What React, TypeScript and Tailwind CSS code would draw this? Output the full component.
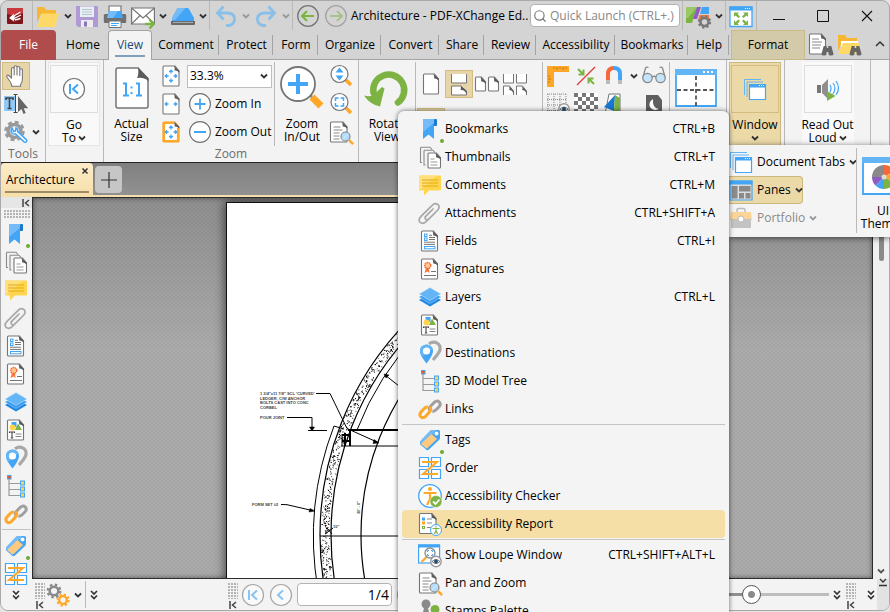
import type { ReactNode } from "react";
import { Search } from "lucide-react";
import clsx from "clsx";

type IconProps = { className?: string };

const BLUE = "#42a5f5";
const GREY = "#757575";

function Svg({ children, className = "size-6", box = "0 0 24 24" }: { children: ReactNode; className?: string; box?: string }) {
  return (
    <svg viewBox={box} className={clsx("shrink-0 overflow-visible", className)} fill="none" aria-hidden="true">
      {children}
    </svg>
  );
}

function Chevron({ className = "text-[#333]" }: IconProps) {
  return (
    <Svg className={clsx("size-2", className)} box="0 0 8 8">
      <path d="M1 2.5l3 3 3-3" stroke="currentColor" strokeWidth="1.8" />
    </Svg>
  );
}

function DoubleChevron() {
  return (
    <Svg className="h-2.5 w-2" box="0 0 8 10">
      <path d="M1 1l3 3 3-3M1 5.5l3 3 3-3" stroke="#333" strokeWidth="1.7" />
    </Svg>
  );
}

function Collapse() {
  return (
    <Svg className="size-2" box="0 0 8 8">
      <path d="M1 0v8M7 1L3.5 4 7 7" stroke="#444" strokeWidth="1.5" />
    </Svg>
  );
}

function Sheet({ x = 3.5, y = 2, w = 16, h = 20, fill = "#fff", stroke = GREY }: { x?: number; y?: number; w?: number; h?: number; fill?: string; stroke?: string }) {
  const r = x + w;
  return (
    <>
      <path d={`M${x} ${y + 1}q0-1 1-1h${w - 5}l4 5v${h - 6}q0 1-1 1H${x + 1}q-1 0-1-1z`} fill={fill} stroke={stroke} strokeWidth="1.1" />
      <path d={`M${r - 5} ${y - 0.3}q1 3.5 0.5 4.5 3 0 4.8 2.6v-2z`} fill="#5a5a5a" />
    </>
  );
}

/* navigation pane icons */

const BookmarkIcon = () => (
  <Svg>
    <path d="M16 2h2q1 0 1 1v5q0 1-1 1h-2z" fill="#1e78cc" />
    <path d="M5 3q0-1 1-1h11l-1 1.5V22l-5.5-4.5L5 22z" fill={BLUE} />
    <path d="M5 3q0-1 1-1h10v4L5 15z" fill="#74bbf8" />
    <circle cx="24" cy="24" r="2" fill="#6fa92f" />
  </Svg>
);

const ThumbnailsIcon = () => (
  <Svg>
    <path d="M4 17.5H2.5V3q0-.8.8-.8H12l2 2.3M7.5 20H6V6q0-.8.8-.8H15l2 2.3" stroke="#8a8a8a" strokeWidth="1.1" />
    <Sheet x={10} y={8} w={12.5} h={15} />
    <path d="M12.5 14h4M12.5 17h7M12.5 20h7" stroke="#9a9a9a" />
  </Svg>
);

const CommentsIcon = () => (
  <Svg>
    <path d="M2 2.500h20q1 0 1 1v13q0 1-1 1H11L6 22.500v-5H2q-1 0-1-1v-13q0-1 1-1z" fill="#ffd54f" />
    <path d="M2 2.500h17L2 17.300q-1-.3-1-1v-13q0-.8 1-.8z" fill="#ffdf7e" />
    <path d="M4 7h16M4 10h16M4 13h16" stroke="#e5a90c" strokeWidth="1.1" />
  </Svg>
);

const AttachmentsIcon = () => (
  <Svg>
    <path d="M15 8L7.7 15.4q-1.3 1.6.1 2.900 1.400 1.200 2.900-.1L19.800 9q2.500-3 .2-5.300-2.500-2.200-5.300.2L3.200 15.200Q-.3 19 2.100 21.400q2.800 2.200 6-.7L17.500 11.300" stroke="#a8a8a8" strokeWidth="1.7" strokeLinecap="round" />
  </Svg>
);

const FieldsIcon = () => (
  <Svg>
    <Sheet />
    <rect x="6.5" y="5" width="2.5" height="2.5" stroke={BLUE} />
    <rect x="6.5" y="9" width="2.5" height="2.5" stroke={BLUE} />
    <path d="M11 6.300h3M11 8.500h6M11 10.500h6M6 13.200h11M6 15.400h11" stroke="#757575" />
    <rect x="6.5" y="17.5" width="10.5" height="2.3" stroke={BLUE} />
  </Svg>
);

const SignaturesIcon = () => (
  <Svg>
    <Sheet />
    <path d="M8 11l-1.500 5 3-1.500 2 1.500-.5-5z" fill="#f4793f" />
    <circle cx="9.7" cy="8.5" r="3" fill="#ffc98a" stroke="#f4683a" strokeWidth="1.5" strokeDasharray="1.5 .6" />
    <path d="M13 14.500h5M6 18.500h12" stroke="#757575" />
  </Svg>
);

const LayersIcon = () => (
  <Svg>
    <path d="M1 15l11-6 11 6-11 6.500z" fill="#1e88e5" />
    <path d="M1 12l11-6 11 6-11 6.500z" fill="#3a9bee" stroke="#b5dbfa" strokeWidth=".5" />
    <path d="M1 9l11-6.500L23 9l-11 6.500z" fill="#64b5f6" stroke="#d8ecfc" strokeWidth=".5" />
  </Svg>
);

const ContentIcon = () => (
  <Svg>
    <Sheet />
    <rect x="7.5" y="4" width="5" height="5" fill={BLUE} />
    <path d="M14 5.500l4 6.500h-7z" fill="#7cb342" />
    <circle cx="8.5" cy="9.5" r="3" fill="#ffd54f" />
    <path d="M5.500 15v-1h5v1M8 14v6M6.800 20h2.400" stroke="#444" strokeWidth="1.1" />
    <path d="M11.500 16h6M11.500 18.500h6" stroke="#888" />
  </Svg>
);

const DestinationsIcon = () => (
  <Svg>
    <path d="M11 3q4-3.300 8.500-.7 4 3 2 8-2 4-6.500 8.700" stroke="#a8a8a8" strokeWidth="3.2" />
    <path d="M8.500 3.500q-6.500.5-6.500 7 .5 4.500 6.500 12 6-7.500 6.500-12 0-6.500-6.500-7z" fill={BLUE} />
    <path d="M8.500 3.500q-6.500.5-6.500 7 .2 2.500 2 5.300L14.500 8Q13 4 8.500 3.500z" fill="#64b5f6" />
    <circle cx="8.5" cy="10" r="3.6" fill="#fff" />
  </Svg>
);

const TreeIcon = () => (
  <Svg>
    <path d="M5 5v16.500h12M5 9.500h12M5 15.500h12" stroke="#9a9a9a" strokeWidth="1.2" />
    <rect x="3.5" y="1.5" width="3.5" height="3.5" fill="#f4511e" stroke={BLUE} />
    <rect x="16.5" y="7" width="4" height="4" fill="#ffd54f" stroke={BLUE} />
    <rect x="16.5" y="13" width="4" height="4" fill="#ffd54f" stroke={BLUE} />
    <rect x="16.5" y="19" width="4" height="4" fill="#ffd54f" stroke={BLUE} />
  </Svg>
);

const LinksIcon = () => (
  <Svg>
    <path d="M12.500 14.500q-2.500-2.800 0-5.300l4-4q2.600-2.300 4.800-.2 2 2.300-.2 4.700l-3.500 3.500q-1.500 1.300-3.200 1" stroke="#a0a0a0" strokeWidth="3" />
    <path d="M11.500 9.800q2.500 2.600 0 5.200l-4 4.500q-2.600 2.300-4.700.2-2-2.300.2-4.700l3.500-3.800Q8 9.800 9.800 10" stroke="#ffa726" strokeWidth="3" />
  </Svg>
);

const TagsIcon = () => (
  <Svg>
    <path d="M2.500 13L12 3q1-1 2-1h6.500q1.500 0 1.500 1.500V10q0 1-1 2L11 21.500q-1.500 1.300-3 0l-5.500-5q-1.300-1.500 0-3.500z" fill={BLUE} />
    <path d="M2.500 13L12 3q1-1 2-1h4L4.500 18.500l-2-2q-1.300-1.500 0-3.500z" fill="#74bbf8" />
    <path d="M4 15l9.500-9 5.500 5-9.500 9q-1 .8-2 0L4 16.500q-.5-.8 0-1.500z" fill="#ffc980" />
    <circle cx="18.5" cy="5.5" r="2" fill="#fff" />
    <circle cx="24" cy="24" r="2" fill="#6fa92f" />
  </Svg>
);

const OrderIcon = () => (
  <Svg>
    <path d="M1.500 1.500h9v9h-9zM13.500 1.500h9v9h-9zM1.500 13.500h9v9h-9zM13.500 13.500h9v9h-9z" fill="#fff" stroke={BLUE} strokeWidth="1.2" />
    <path d="M4 6h15L5 18h15" stroke="#ffa726" strokeWidth="2" />
  </Svg>
);

const CheckerIcon = () => (
  <Svg>
    <circle cx="12" cy="12" r="11.3" fill="#fff" stroke={BLUE} strokeWidth="1.3" />
    <circle cx="12" cy="5" r="2" fill="#ffa726" />
    <path d="M5.500 9h13M12 9v6L9 21M12.500 14v3" stroke="#ffa726" strokeWidth="2.2" />
    <circle cx="18" cy="17.5" r="6" fill="#7cb342" stroke="#fff" strokeWidth=".5" />
    <path d="M15 17.500l2.500 2.500 4-4.500" stroke="#fff" strokeWidth="1.8" />
  </Svg>
);

const ReportIcon = () => (
  <Svg>
    <Sheet x={1.5} y={1.5} w={16.5} h={20} />
    <rect x="4.5" y="6" width="2" height="2" stroke={BLUE} />
    <rect x="4.5" y="10" width="2" height="2" stroke="#ffa726" />
    <rect x="4.5" y="14.5" width="2" height="2" stroke="#7cb342" />
    <path d="M9 7h5M9 11h5M9 15.500h4" stroke="#888" />
    <circle cx="18" cy="18" r="5.5" fill="#fff" stroke={BLUE} />
    <path d="M14.500 16.500h7M18 16v2.500l-1.500 3.500M18 18.500l1.500 3.500M18 14v1.500" stroke="#7cb342" strokeWidth="1.2" />
  </Svg>
);

const Glass = ({ x, y, r = 4.5 }: { x: number; y: number; r?: number }) => (
  <>
    <path d={`M${x + r * 0.8} ${y + r * 0.8}l4 4`} stroke="#ffa726" strokeWidth="2.4" />
    <circle cx={x} cy={y} r={r} fill="#b5dcfa" stroke="#8a8a8a" strokeWidth="1.2" />
    <path d={`M${x - r * 0.6} ${y + r * 0.6}L${x + r * 0.6} ${y - r * 0.6}`} stroke="#e3f2fd" strokeWidth=".8" />
  </>
);

const Eye = ({ x, y }: { x: number; y: number }) => (
  <>
    <circle cx={x} cy={y} r="5.2" fill="#fff" stroke="#999" strokeWidth="1.4" />
    <path d={`M${x - 4} ${y}q4-4 8 0-4 4-8 0z`} fill="#fff" stroke="#555" strokeWidth=".8" />
    <circle cx={x} cy={y} r="2" fill="#1e4d78" />
  </>
);

const LoupeIcon = () => (
  <Svg>
    <rect x=".6" y="2" width="21" height="18" fill="#fff" stroke={BLUE} strokeWidth="1.2" />
    <path d="M0 1.500h22v3H0z" fill={BLUE} />
    <path d="M8.500 14l-5 5" stroke="#ffa726" strokeWidth="2.2" />
    <circle cx="12" cy="10" r="5" fill="#fff" stroke="#8a8a8a" strokeWidth="1.3" />
    <path d="M9.500 9V7.500H11M13 7.500h1.500V9M14.500 11v1.500H13M11 12.500H9.500V11" stroke={BLUE} />
    <Eye x={18} y={18.5} />
  </Svg>
);

const PanZoomIcon = () => (
  <Svg>
    <Sheet x={1.5} y={2} w={16.5} h={20} />
    <path d="M4.500 7h7M4.500 10h9M4.500 13h6M4.500 16h6M4.500 19h6" stroke="#888" />
    <Glass x={16.5} y={16.5} />
  </Svg>
);

const StampsIcon = () => (
  <Svg>
    <circle cx="8" cy="5" r="4.5" fill="#8a8a8a" />
    <path d="M6 9h4l1 4 6 2v6H1v-6l4-2z" fill="#8a8a8a" />
    <circle cx="17" cy="10.5" r="4.5" fill="#7cb342" />
    <path d="M12 16h10v6H12z" fill="#7cb342" />
  </Svg>
);

type PaneItem = { label: string; icon: () => ReactNode; keys?: string };

const PANES: PaneItem[][] = [
  [
    { label: "Bookmarks", icon: BookmarkIcon, keys: "CTRL+B" },
    { label: "Thumbnails", icon: ThumbnailsIcon, keys: "CTRL+T" },
    { label: "Comments", icon: CommentsIcon, keys: "CTRL+M" },
    { label: "Attachments", icon: AttachmentsIcon, keys: "CTRL+SHIFT+A" },
    { label: "Fields", icon: FieldsIcon, keys: "CTRL+I" },
    { label: "Signatures", icon: SignaturesIcon },
    { label: "Layers", icon: LayersIcon, keys: "CTRL+L" },
    { label: "Content", icon: ContentIcon },
    { label: "Destinations", icon: DestinationsIcon },
    { label: "3D Model Tree", icon: TreeIcon },
    { label: "Links", icon: LinksIcon },
  ],
  [
    { label: "Tags", icon: TagsIcon },
    { label: "Order", icon: OrderIcon },
    { label: "Accessibility Checker", icon: CheckerIcon },
    { label: "Accessibility Report", icon: ReportIcon },
  ],
  [
    { label: "Show Loupe Window", icon: LoupeIcon, keys: "CTRL+SHIFT+ALT+L" },
    { label: "Pan and Zoom", icon: PanZoomIcon },
    { label: "Stamps Palette", icon: StampsIcon },
  ],
];

/* title bar icons */

const LogoIcon = () => (
  <Svg className="size-4" box="0 0 16 16">
    <rect width="16" height="16" rx="1" fill="#7d1519" />
    <path d="M0 1q0-1 1-1h14q1 0 1 1v4Q9 9 0 6z" fill="#c9393d" />
    <path d="M13.500 4L6 8.500M14 7L6 11M13.500 10.500L8 12" stroke="#fff" strokeWidth="1.3" />
    <path d="M2 10l5-4.500-.5 2.500 2 .5-1.500 1.500 1 1.500-1.500.5 1 2z" fill="#fff" />
  </Svg>
);

const FolderIcon = () => (
  <Svg>
    <path d="M1 3h7l2 3h10v4H5L1 19z" fill="#f7b733" />
    <path d="M6 9.500h17l-4 13.500H1z" fill="#ffd968" />
  </Svg>
);

const SaveIcon = () => (
  <Svg>
    <path d="M1 2h21q1 0 1 1v20H3l-2-2z" fill="#b09ad6" />
    <path d="M5 2.500h14V13H5z" fill="#e9f0f4" />
    <path d="M7 5.500h10M7 8h10M7 10.500h10" stroke="#b5c4cf" />
    <path d="M6 16h12v7H6z" fill="#ececec" />
    <path d="M9 17.500h3v5H9z" fill="#8d76b8" />
  </Svg>
);

const PrinterIcon = () => (
  <Svg>
    <path d="M6 2h12v8H6z" fill="#fff" stroke={GREY} strokeWidth="1.2" />
    <path d="M2 10h20q1.200 0 1.200 1.500V18q0 1-1 1H2q-1.200 0-1.200-1v-6.500Q.8 10 2 10z" fill="#707070" />
    <path d="M6 7l-2 7h16l-2-7z" fill={BLUE} />
    <path d="M6 7l-2 7h6l5-7z" fill="#74bbf8" />
    <path d="M6 17h12v6.500H6z" fill="#fff" stroke={GREY} />
    <path d="M8 19.500h8M8 21.500h6" stroke={BLUE} />
  </Svg>
);

const MailIcon = () => (
  <Svg>
    <path d="M.6 4h22.800v16H.6z" fill="#fff" stroke={GREY} strokeWidth="1.2" />
    <path d="M.6 4L12 14 23.400 4M.6 20L9 11.500M23.400 20L15 11.500" stroke={GREY} strokeWidth="1.1" />
    <path d="M14 20h7M18.500 15.500l4 4.500-4 4.500" stroke="#7cb342" strokeWidth="2.5" />
  </Svg>
);

const ScannerIcon = () => (
  <Svg>
    <path d="M6 5q0-1 1.500-1h9q1 0 1.500 1l5 9v3H1v-3z" fill={BLUE} />
    <path d="M6 5q0-1 1.500-1h7L4 16H1v-2z" fill="#74bbf8" />
    <path d="M0 17h24v3q0 1-1 1H1q-1 0-1-1z" fill="#6a6a6a" />
    <path d="M2 18.500h20" stroke="#aaa" />
  </Svg>
);

const UndoIcon = ({ flip }: { flip?: boolean }) => (
  <Svg className={clsx("size-6", flip && "-scale-x-100")}>
    <path d="M4 9h10q6.500.5 6.500 6T15 21.500h-3" stroke="#8abfe8" strokeWidth="2.800" />
    <path d="M9.500 2.500L3.500 9l6 6.500" stroke="#8abfe8" strokeWidth="2.800" />
  </Svg>
);

const CircleArrow = ({ flip }: { flip?: boolean }) => (
  <Svg className={clsx("size-6", flip && "-scale-x-100 opacity-50")}>
    <circle cx="12" cy="12" r="10.3" stroke={GREY} strokeWidth="1.3" />
    <path d="M6.500 12H18M11 7l-5 5 5 5" stroke="#7cb342" strokeWidth="2" />
  </Svg>
);

const UiOptionsIcon = () => (
  <Svg>
    <path d="M0 3h11L6 19H0z" fill="#7cb342" />
    <path d="M0 3h11L2 14H0z" fill="#98c963" />
    <path d="M11 3h4l-4 12H7z" fill="#8e5cc2" />
    <path d="M16 3h7v7h-9z" fill={BLUE} />
    <path d="M13.500 11H23v5H12z" fill="#f4793f" />
    <circle cx="18.5" cy="18" r="4" stroke="#777" strokeWidth="2.5" fill="#d4d4d4" />
    <circle cx="18.5" cy="18" r="5.7" stroke="#777" strokeWidth="2" strokeDasharray="2.2 2.28" />
  </Svg>
);

const FullScreenIcon = () => (
  <Svg>
    <path d="M1 3h22v19.500H1z" fill="#fff" stroke={BLUE} strokeWidth="1.3" />
    <path d="M.4 2.500h23v4H.4z" fill={BLUE} />
    <path d="M16 4.500h5" stroke="#fff" strokeDasharray="1 1" />
    <path d="M5 13V8.500h5L8.500 10l2.500 2.500-1.500 1.500L6.500 11.500zM19 13V8.500h-5l1.500 1.500-2.500 2.500 1.500 1.500 3-2.500zM5 16v5h5L8.500 19.500l2.500-2.500L9.500 15.500l-3 2.500zM19 16v5h-5l1.500-1.500-2.500-2.500 1.500-1.500 3 2.500z" fill="#7cb342" />
  </Svg>
);

const Binoculars = () => (
  <path d="M12.500 22l2.200-8h3v2h1.600v-2h3l2.200 8q0 1.500-2.500 1.500T19.500 22v-2h-2v2q0 1.500-2.500 1.500T12.500 22z" fill="#666" />
);

/* ribbon icons */

const HandIcon = () => (
  <Svg>
    <path d="M7.500 20.500q-1-3-4-6.500-1.500-2-.2-2.800 1.500-.6 4.200 3V5q0-1.500 1.300-1.500T10.200 5v6-7.800q0-1.500 1.400-1.500T13 3.200V11 4q0-1.500 1.400-1.500T15.800 4v7.500V6q0-1.300 1.300-1.300T18.400 6v9q0 3-1.800 5.500v1.800h-9z" fill="#fff" stroke="#777" strokeWidth="1.1" strokeLinejoin="round" />
  </Svg>
);

const SelectTextIcon = () => (
  <Svg>
    <path d="M0 4h11v15H0z" fill="#90caf9" />
    <path d="M2 8V6h7v2M5.500 6v10M3.500 16.500h4" stroke="#444" strokeWidth="1.6" />
    <path d="M9.500 2.500h4M9.500 20.500h4M11.500 2.500v18" stroke="#444" />
    <path d="M14 4v16l3.500-3 2 5 2.200-1-2-4.700h4.500z" fill="#666" />
  </Svg>
);

const ToolSettingsIcon = () => (
  <Svg>
    <circle cx="10.5" cy="11" r="9" stroke="#9a9a9a" strokeWidth="2.5" strokeDasharray="4 3.07" />
    <circle cx="10.5" cy="11" r="6.5" stroke="#9a9a9a" strokeWidth="3.5" />
    <path d="M8 8q-2 3.500.5 5.500 1.500 1 3 .3l8.500 8q1.500 1 2.500 0 .8-1-.2-2.200l-8.500-8q.4-2.600-1.800-3.600l-.5 3-2 .3z" fill="#fff" stroke={BLUE} strokeWidth="1.5" />
  </Svg>
);

const GoToIcon = () => (
  <Svg>
    <circle cx="12" cy="12" r="10.5" fill="#fff" stroke={GREY} strokeWidth="1.2" />
    <path d="M8 7v10" stroke={BLUE} strokeWidth="2" />
    <path d="M16 7.500L11 12l5 4.500" stroke={BLUE} strokeWidth="2" />
  </Svg>
);

const ActualSizeIcon = () => (
  <Svg className="h-11 w-9" box="0 0 36 44">
    <path d="M2 4q0-2 2-2h20l10 11v27q0 2-2 2H4q-2 0-2-2z" fill="#fff" stroke={GREY} strokeWidth="1.5" />
    <path d="M24 1.500q1 7-1 10.500 8-1 11.500 3.500v-3.500z" fill="#5a5a5a" />
    <path d="M9 17.500h3V29M9 29.500h6M22 17.500h3V29M22 29.500h6" stroke={BLUE} strokeWidth="2" />
    <path d="M17.500 20.500v2M17.500 26v2" stroke={BLUE} strokeWidth="2" />
  </Svg>
);

const FitIcon = ({ orange, wide }: { orange?: boolean; wide?: boolean }) => (
  <Svg>
    <Sheet x={4} y={2} stroke={orange ? "#fb9a17" : GREY} />
    {orange && <path d="M15 3H5v18h14V8" stroke="#ffa726" strokeWidth="2.2" />}
    <path d="M9.500 12H6.500M8 10.200L6.200 12 8 13.800M14.500 12h3M16 10.200l1.800 1.800-1.800 1.800" stroke={BLUE} strokeWidth="1.3" />
    {!wide && <path d="M12 9.500V6.500M10.200 8L12 6.200 13.800 8M12 14.500v3M10.200 16l1.800 1.800 1.800-1.800" stroke={BLUE} strokeWidth="1.3" />}
  </Svg>
);

const ZoomStepIcon = ({ plus }: { plus?: boolean }) => (
  <Svg>
    <circle cx="12" cy="12" r="10.4" fill="#fff" stroke={GREY} strokeWidth="1.2" />
    <path d={plus ? "M6.500 12h11M12 6.500v11" : "M6 12h12"} stroke={BLUE} strokeWidth="1.8" />
  </Svg>
);

const ZoomInOutIcon = () => (
  <Svg className="size-12" box="0 0 48 48">
    <path d="M34 33l9 9" stroke="#ffa726" strokeWidth="7" />
    <path d="M30 29l4 4" stroke="#888" strokeWidth="2.5" />
    <circle cx="20" cy="20" r="17" fill="#fff" stroke={GREY} strokeWidth="1.8" />
    <path d="M10 20h20M20 10v20" stroke={BLUE} strokeWidth="4" />
  </Svg>
);

const ZoomToolIcon = ({ fit }: { fit?: boolean }) => (
  <Svg>
    <path d="M17 16l5 5" stroke="#ffa726" strokeWidth="3.6" />
    <circle cx="10.5" cy="10" r="8.5" fill="#fff" stroke={GREY} strokeWidth="1.2" />
    {fit ? (
      <path d="M6.500 9V6h3M11.500 6h3v3M14.500 11v3h-3M9.500 14h-3v-3" stroke={BLUE} strokeWidth="1.5" />
    ) : (
      <path d="M10.500 3.500l4 5h-8zM10.500 16.500l4-5h-8z" fill={BLUE} />
    )}
  </Svg>
);

const RotateIcon = () => (
  <Svg className="size-12" box="0 0 48 48">
    <path d="M10.500 25A15.500 15.500 0 1 1 35 34.500" stroke="#7cb342" strokeWidth="6.500" strokeLinecap="round" />
    <path d="M1 27.500q5 1.500 9 0L19 19l2.500 1.500L17 38.500Q7 36.500 1 27.500z" fill="#7cb342" />
  </Svg>
);

const SinglePage = () => (
  <Svg>
    <Sheet x={4.5} y={2} w={15} h={20} />
  </Svg>
);

const ContinuousIcon = () => (
  <Svg>
    <path d="M4.500 2v9h15V2" fill="#fff" stroke={GREY} />
    <path d="M4.500 23v-9h9l6 5v4z" fill="#fff" stroke={GREY} />
    <path d="M13.500 13.500q1 3 0 4.500 5-.5 6 5v-4z" fill="#5a5a5a" />
  </Svg>
);

const TwoPages = () => (
  <Svg>
    <Sheet x={0.5} y={5} w={10} h={14} />
    <Sheet x={13.5} y={5} w={10} h={14} />
  </Svg>
);

const FourPages = () => (
  <Svg>
    <path d="M.5 2v9h10V2M13.500 2v9h10V2M.5 23v-9h6l4 5v4M13.500 23v-9h6l4 5v4" fill="#fff" stroke={GREY} />
    <path d="M6 14q1 3 0 4 4 0 4.500 5v-4zM19 14q1 3 0 4 4 0 4.500 5v-4z" fill="#5a5a5a" />
  </Svg>
);

const RulerIcon = () => (
  <Svg>
    <path d="M1 2h22v6H8v15H1z" fill="#ffa726" />
    <path d="M8 3v2M11 3v3M14 3v2M17 3v3M20 3v2M2 12h2M2 15h3M2 18h2" stroke="#c77a10" />
  </Svg>
);

const SnapIcon = () => (
  <Svg>
    <path d="M4 5l5 5M9.500 5.500v5h-5M20 20l-5-5M14.500 19.500v-5h5" stroke="#7cb342" strokeWidth="2" />
    <path d="M21 3L3 21" stroke="#e53935" strokeWidth="1.3" />
  </Svg>
);

const MagnetIcon = () => (
  <Svg>
    <path d="M6 17V10q0-6 6-6" stroke="#f4683a" strokeWidth="4" />
    <path d="M12 4q6 0 6 6v7" stroke="#42a5f5" strokeWidth="4" />
    <path d="M6 16v4M18 16v4" stroke="#bbb" strokeWidth="4" />
  </Svg>
);

const GlassesIcon = () => (
  <Svg>
    <path d="M1 13L3.500 4q1-1.500 3-.5M23 13l-2.500-9q-1-1.500-3-.5M10 13q2-1.500 4 0" stroke="#888" strokeWidth="1.3" />
    <circle cx="5.5" cy="14" r="4.7" fill="#c5e4fb" stroke="#888" strokeWidth="1.3" />
    <circle cx="18.5" cy="14" r="4.7" fill="#c5e4fb" stroke="#888" strokeWidth="1.3" />
  </Svg>
);

const GridIcon = () => (
  <Svg>
    <path d="M1 2h20M1 7.500h20M1 13h20M1 18.500h20M2 2v20M8 2v20M14 2v20M20 2v20" stroke="#888" strokeDasharray="1 1" />
    <Eye x={18} y={17} />
  </Svg>
);

const TransparencyIcon = () => (
  <Svg>
    <rect y="1" width="24" height="22" fill="#fff" />
    {[1, 5, 9, 13, 17].map((y, i) => (
      <path key={y} d={i % 2 ? `M4 ${y + 2}h20` : `M0 ${y + 2}h24`} stroke="#777" strokeWidth="4" strokeDasharray="4 4" />
    ))}
  </Svg>
);

const ContrastIcon = () => (
  <Svg>
    <path d="M7 2h11v20H3z" fill="#fff" stroke={GREY} />
    <path d="M13 3L2 15l10 4z" fill="#1976d2" />
    <path d="M13 3l5 3v13h-6z" fill="#7cb342" />
  </Svg>
);

const NightIcon = () => (
  <Svg>
    <path d="M4 3h12l4 5v14H4z" fill="#5f5f5f" />
    <path d="M11 7q-5 3-3 8 3 5 9 2-7-1-6-10z" fill="#fff" />
  </Svg>
);

const SplitIcon = () => (
  <Svg className="h-10 w-11" box="0 0 44 40">
    <path d="M2 2h40v36H2z" fill="#fff" stroke={BLUE} strokeWidth="1.8" />
    <path d="M1 1h42v6H1z" fill="#64b5f6" />
    <path d="M29 4h10" stroke="#fff" strokeWidth="1.8" strokeDasharray="2 2" />
    <path d="M3 22h38M22 8v30" stroke="#555" strokeWidth="1.8" strokeDasharray="4 2.5" />
  </Svg>
);

const WindowsIcon = () => (
  <Svg>
    <path d="M1.500 18V2.500H18M4 20V5h16" stroke="#64b5f6" />
    <path d="M6.500 8h16v14.500h-16z" fill="#fff" stroke={BLUE} strokeWidth="1.2" />
    <path d="M6 7h17v3.500H6z" fill={BLUE} />
    <path d="M16 8.500h5" stroke="#fff" strokeDasharray="1 1" />
  </Svg>
);

const PanesIcon = () => (
  <Svg>
    <path d="M1 3h22v19H1z" fill="#ddd" stroke={BLUE} strokeWidth="1.2" />
    <path d="M.4 2.500h23v4H.4z" fill={BLUE} />
    <path d="M2.500 8h6v12.500h-6zM10 8h11.500v5.500H10zM10 15h5v5.500h-5zM16.500 15h5v5.500h-5z" fill="#8a8a8a" />
  </Svg>
);

const PortfolioIcon = () => (
  <Svg>
    <path d="M8 6V4q0-1.500 1.500-1.500h5Q16 2.500 16 4v2" stroke="#bbb" strokeWidth="1.5" />
    <path d="M2 6h20l1 8H1z" fill="#fbd598" />
    <path d="M2 13h20v8q0 1-1 1H3q-1 0-1-1z" fill="#c3c3c3" />
    <circle cx="12" cy="13" r="3" fill="#fff" stroke="#bbb" />
  </Svg>
);

const ReadAloudIcon = () => (
  <Svg>
    <path d="M1 8h4v8H1z" fill="#777" />
    <path d="M6 8l6-6v20l-6-6z" fill="#8f8f8f" />
    <path d="M14 8q2 3 0 7M17 6q4 5 0 11M20 4q5 7 0 14" stroke={BLUE} strokeWidth="1.2" />
    <path d="M11 14l8.500 5-8.500 5z" fill="#7cb342" />
  </Svg>
);

const ThemesIcon = () => (
  <Svg className="h-10 w-11" box="0 0 44 40">
    <path d="M2 2h40v36H2z" fill="#fff" stroke={BLUE} strokeWidth="1.8" />
    <path d="M1 1h42v6H1z" fill="#64b5f6" />
    <path d="M23 21V9a12 12 0 0 0-12 12z" fill="#8a8a8a" />
    <path d="M23 21V9a12 12 0 0 1 10.400 6z" fill="#f4683a" />
    <path d="M23 21l10.400-6a12 12 0 0 1 0 12z" fill="#ffa726" />
    <path d="M23 21l10.400 6A12 12 0 0 1 23 33z" fill="#7cb342" />
    <path d="M23 21v12a12 12 0 0 1-8.500-3.500z" fill={BLUE} />
    <path d="M23 21l-8.500 8.500A12 12 0 0 1 11 21z" fill="#8e5cc2" />
    <circle cx="23" cy="21" r="2.500" fill="#ddd" />
  </Svg>
);

const GearsIcon = () => (
  <Svg>
    <circle cx="8" cy="8" r="4.3" stroke="#8a8a8a" strokeWidth="2.5" />
    <circle cx="8" cy="8" r="6.3" stroke="#8a8a8a" strokeWidth="2.3" strokeDasharray="2.5 2.45" />
    <circle cx="17" cy="17" r="3.8" stroke="#ffa726" strokeWidth="2.3" />
    <circle cx="17" cy="17" r="5.5" stroke="#ffa726" strokeWidth="2.3" strokeDasharray="2.2 2.12" />
  </Svg>
);

/* building blocks */

function Divider({ className }: IconProps) {
  return <div className={clsx("w-px shrink-0 self-stretch bg-[#b9b9b9]", className)} />;
}

function ToolButton({ label, className, children }: { label: string; className?: string; children: ReactNode }) {
  return (
    <button type="button" aria-label={label} className={clsx("flex h-7 shrink-0 items-center justify-center", className)}>
      {children}
    </button>
  );
}

function Grip({ className }: IconProps) {
  return (
    <div
      className={clsx(
        "shrink-0 bg-[radial-gradient(circle_at_1px_1px,#b0b0b0_0.7px,transparent_0.8px)] bg-[length:3px_3px]",
        className,
      )}
    />
  );
}

function BarGrip() {
  return (
    <div className="flex w-3 shrink-0 flex-col items-center gap-0.5 pt-1">
      <Grip className="h-4 w-2.5" />
      <Collapse />
    </div>
  );
}

function TitleBar() {
  return (
    <header className="flex h-[29px] shrink-0 items-center">
      <div className="flex w-[31px] shrink-0 justify-center pr-1">
        <LogoIcon />
      </div>
      <Divider />
      <ToolButton label="Open" className="w-[29px]"><FolderIcon /></ToolButton>
      <ToolButton label="Open recent" className="w-[11px]"><Chevron /></ToolButton>
      <ToolButton label="Save" className="w-7"><SaveIcon /></ToolButton>
      <ToolButton label="Print" className="w-7"><PrinterIcon /></ToolButton>
      <ToolButton label="Send by email" className="w-7"><MailIcon /></ToolButton>
      <ToolButton label="Email options" className="w-3"><Chevron /></ToolButton>
      <ToolButton label="Scan" className="w-7"><ScannerIcon /></ToolButton>
      <ToolButton label="Scan options" className="w-3"><Chevron /></ToolButton>
      <Divider />
      <ToolButton label="Undo" className="w-8"><UndoIcon /></ToolButton>
      <ToolButton label="Undo history" className="w-2"><Chevron className="text-[#999]" /></ToolButton>
      <ToolButton label="Redo" className="w-8"><UndoIcon flip /></ToolButton>
      <ToolButton label="Redo history" className="w-2"><Chevron className="text-[#999]" /></ToolButton>
      <Divider className="ml-0.5" />
      <ToolButton label="Previous view" className="ml-px w-7"><CircleArrow /></ToolButton>
      <ToolButton label="Next view" className="w-7"><CircleArrow flip /></ToolButton>
      <h1 className="min-w-0 flex-1 overflow-hidden pl-px whitespace-nowrap">Architecture - PDF-XChange Ed..</h1>
      <label className="mr-0.5 flex h-[23px] w-[150px] shrink-0 items-center gap-[3px] rounded-sm border border-[#b3b3b3] bg-white pl-0.5">
        <Search className="size-3.5 shrink-0 text-[#777]" strokeWidth={2} />
        <input
          type="text"
          aria-label="Quick Launch"
          placeholder="Quick Launch (CTRL+.)"
          className="w-full min-w-0 bg-transparent outline-none placeholder:text-[#888]"
        />
      </label>
      <Divider />
      <ToolButton label="UI options" className="w-[30px]"><UiOptionsIcon /></ToolButton>
      <ToolButton label="More UI options" className="w-3"><Chevron /></ToolButton>
      <Divider />
      <ToolButton label="Full screen" className="w-[30px]"><FullScreenIcon /></ToolButton>
      <Divider />
      <ToolButton label="Minimize" className="w-11">
        <Svg className="size-3" box="0 0 12 12"><path d="M0 9.500h12" stroke="#111" /></Svg>
      </ToolButton>
      <ToolButton label="Maximize" className="w-11">
        <Svg className="size-3" box="0 0 12 12"><path d="M.5.5h11v11H.5z" stroke="#111" /></Svg>
      </ToolButton>
      <ToolButton label="Close" className="w-11">
        <Svg className="size-3" box="0 0 12 12"><path d="M1 1l10 10M11 1L1 11" stroke="#111" strokeWidth="1.1" /></Svg>
      </ToolButton>
    </header>
  );
}

const TABS = [
  { label: "Comment", width: "w-[67px]" },
  { label: "Protect", width: "w-[54px]" },
  { label: "Form", width: "w-[45px]" },
  { label: "Organize", width: "w-[63px]" },
  { label: "Convert", width: "w-[58px]" },
  { label: "Share", width: "w-[45px]" },
  { label: "Review", width: "w-[52px]" },
  { label: "Accessibility", width: "w-[79px]" },
  { label: "Bookmarks", width: "w-[73px]" },
  { label: "Help", width: "w-[41px]" },
];

function RibbonTabs() {
  return (
    <nav className="flex h-[30px] shrink-0 items-stretch shadow-[inset_0_-1px_0_#a3a3a3]">
      <button type="button" className="w-[55px] shrink-0 rounded-t-sm bg-[#b04c4c] text-white">File</button>
      <button type="button" className="w-[52px] shrink-0 pl-0.5">Home</button>
      <button type="button" className="flex w-11 shrink-0 flex-col items-center rounded-t-sm border border-b-0 border-[#a3a3a3] bg-[#f3f3f3] pt-1.5 text-[#234a7d]">
        View
        <span className="mt-0.5 h-0.5 w-[30px] bg-[#7f9fba]" />
      </button>
      {TABS.map((tab) => (
        <button key={tab.label} type="button" className={clsx("flex shrink-0 items-center justify-end", tab.width)}>
          <span className="flex-1 pl-0.5 text-center">{tab.label}</span>
          <span className="h-5 w-px bg-[#a3a3a3]" />
        </button>
      ))}
      <button type="button" className="ml-0.5 w-[74px] shrink-0 border border-[#c9bb86] bg-[#d3caaa]">Format</button>
      <ToolButton label="Find" className="ml-0.5 w-7">
        <Svg>
          <Sheet x={0.5} y={2} w={16} h={20} />
          <path d="M3 7h7M3 10h10M3 13h9M3 16h8" stroke="#888" />
          <Binoculars />
        </Svg>
      </ToolButton>
      <ToolButton label="Search" className="w-7">
        <Svg>
          <path d="M1 3h7l2 3h10v4H5L1 19z" fill="#f7b733" />
          <path d="M4 9h17v6H4z" fill="#fff" />
          <path d="M6 11h17l-3 11H1z" fill="#ffd968" />
          <Binoculars />
        </Svg>
      </ToolButton>
      <ToolButton label="Collapse ribbon" className="ml-auto w-[18px]">
        <Svg className="size-2" box="0 0 8 8"><path d="M0 6l4-4 4 4" stroke="#333" strokeWidth="1.5" /></Svg>
      </ToolButton>
    </nav>
  );
}

function Group({ label, className, children }: { label?: string; className?: string; children: ReactNode }) {
  return (
    <section className={clsx("flex shrink-0 flex-col border-r border-[#b9b9b9]", className)}>
      <div className="flex h-[86px] items-start">{children}</div>
      {label && <div className="text-center leading-4 text-[#6d6d6d]">{label}</div>}
    </section>
  );
}

function BigButton({ icon, lines, className }: { icon: ReactNode; lines: ReactNode[]; className?: string }) {
  return (
    <button type="button" className={clsx("flex shrink-0 flex-col items-center leading-[13px] whitespace-nowrap", className)}>
      {icon}
      {lines.map((line, i) => (
        <span key={i} className="flex h-[13px] items-center gap-0.5">{line}</span>
      ))}
    </button>
  );
}

function Ribbon() {
  return (
    <div className="flex h-[103px] shrink-0 border-b border-[#222] bg-[#f3f3f3]">
      <Group label="Tools" className="w-[45px]">
        <div className="flex flex-col pt-0.5 pl-px">
          <ToolButton label="Hand tool" className="w-7 border border-[#d4bc80] bg-[#e6d5a8]"><HandIcon /></ToolButton>
          <ToolButton label="Select text" className="w-7"><SelectTextIcon /></ToolButton>
          <div className="flex">
            <ToolButton label="Tool settings" className="w-7"><ToolSettingsIcon /></ToolButton>
            <ToolButton label="More tools" className="w-3"><Chevron /></ToolButton>
          </div>
        </div>
      </Group>
      <Group className="w-[58px]">
        <div className="px-0.5 pt-0.5">
          <BigButton
            className="h-[84px] w-[52px] border border-[#e6e6e6] bg-[#f9f9f9] pt-0.5"
            icon={<span className="mb-[5px] flex size-12 items-center justify-center border border-[#dcdcdc] bg-[#f9f9f9]"><GoToIcon /></span>}
            lines={["Go", <>To <Chevron /></>]}
          />
        </div>
      </Group>
      <Group label="Zoom" className="w-[255px]">
        <BigButton className="w-[55px] pt-1.5" icon={<span className="mb-[7px]"><ActualSizeIcon /></span>} lines={["Actual", "Size"]} />
        <div className="flex flex-col pt-0.5">
          <ToolButton label="Fit page" className="w-6"><FitIcon /></ToolButton>
          <ToolButton label="Fit width" className="w-6"><FitIcon wide /></ToolButton>
          <ToolButton label="Fit visible" className="w-6"><FitIcon orange /></ToolButton>
        </div>
        <div className="flex w-[91px] flex-col pt-0.5 pl-1">
          <label className="flex h-7 w-[85px] items-center">
            <span className="relative flex w-full items-center">
              <select aria-label="Zoom level" className="h-[23px] w-full appearance-none border border-[#bdbdbd] bg-white pl-0.5 outline-none">
                <option>33.3%</option>
                <option>100%</option>
              </select>
              <span className="pointer-events-none absolute right-1"><Chevron /></span>
            </span>
          </label>
          <button type="button" className="flex h-7 items-center gap-[3px] pl-px whitespace-nowrap"><ZoomStepIcon plus />Zoom In</button>
          <button type="button" className="flex h-7 items-center gap-[3px] pl-px whitespace-nowrap"><ZoomStepIcon />Zoom Out</button>
        </div>
        <Divider className="mt-0.5" />
        <BigButton className="w-[54px] pt-1" icon={<span className="mb-[5px]"><ZoomInOutIcon /></span>} lines={["Zoom", "In/Out"]} />
        <div className="flex flex-col pt-0.5">
          <ToolButton label="Dynamic zoom" className="w-6"><ZoomToolIcon /></ToolButton>
          <ToolButton label="Loupe" className="w-6"><ZoomToolIcon fit /></ToolButton>
          <ToolButton label="Pan and zoom" className="w-6"><PanZoomIcon /></ToolButton>
        </div>
      </Group>
      <div className="flex w-14 shrink-0 pt-2">
        <BigButton className="w-14" icon={<span className="mb-px"><RotateIcon /></span>} lines={["Rotate", "View"]} />
      </div>
      <Divider className="mt-0.5" />
      <div className="flex w-[126px] shrink-0 flex-col gap-2.5 pt-2.5 pl-px">
        <div className="flex">
          <ToolButton label="Single page" className="w-7"><SinglePage /></ToolButton>
          <ToolButton label="Continuous" className="w-7 border border-[#d4bc80] bg-[#e6d5a8]"><ContinuousIcon /></ToolButton>
          <ToolButton label="Two pages" className="w-7"><TwoPages /></ToolButton>
          <ToolButton label="Two pages continuous" className="w-7"><FourPages /></ToolButton>
        </div>
        <ToolButton label="Page layout" className="w-7 border border-[#d4bc80] bg-[#e6d5a8]"><SinglePage /></ToolButton>
      </div>
      <Divider className="mt-0.5" />
      <div className="flex w-[126px] shrink-0 flex-col pt-0.5 pl-px">
        <div className="flex">
          <ToolButton label="Rulers" className="w-7"><RulerIcon /></ToolButton>
          <ToolButton label="Snap" className="w-7"><SnapIcon /></ToolButton>
          <ToolButton label="Magnet" className="w-7"><MagnetIcon /></ToolButton>
          <ToolButton label="Snap options" className="w-3"><Chevron /></ToolButton>
          <ToolButton label="Read mode" className="w-7"><GlassesIcon /></ToolButton>
        </div>
        <div className="flex">
          <ToolButton label="Grid" className="w-7"><GridIcon /></ToolButton>
          <ToolButton label="Transparency" className="w-7"><TransparencyIcon /></ToolButton>
          <ToolButton label="Color contrast" className="mr-3 w-7"><ContrastIcon /></ToolButton>
          <ToolButton label="Night mode" className="w-7"><NightIcon /></ToolButton>
        </div>
      </div>
      <Divider className="mt-0.5" />
      <div className="flex w-14 shrink-0 justify-center pt-2 pr-1">
        <button type="button" aria-label="Split view" className="h-10"><SplitIcon /></button>
      </div>
      <Divider />
      <div className="w-[57px] shrink-0 px-0.5 pt-0.5">
        <BigButton
          className="h-[84px] w-[52px] border border-[#cbb87e] bg-[#ebd9a8] pt-0.5"
          icon={<span className="mb-[5px] flex size-12 items-center justify-center border border-[#d4bc80]"><WindowsIcon /></span>}
          lines={["Window", <Chevron />]}
        />
      </div>
      <Divider />
      <div className="flex w-[85px] shrink-0 justify-center pt-0.5">
        <BigButton
          className="h-[84px] w-[52px] bg-[#f9f9f9] pt-[3px]"
          icon={<span className="mb-[5px] flex size-12 items-center justify-center border border-[#dcdcdc] bg-[#f9f9f9]"><ReadAloudIcon /></span>}
          lines={["Read Out", <>Loud <Chevron /></>]}
        />
      </div>
      <Divider />
    </div>
  );
}

function DocumentTabs() {
  return (
    <div className="flex h-[34px] shrink-0 items-start border-b-2 border-[#f5dfac] bg-linear-to-b from-[#808080] to-[#919191]">
      <div className="relative flex h-[34px] w-[92px] shrink-0 items-center rounded-t-sm bg-linear-to-b from-[#fbecc8] to-[#f6dea8] pl-[5px]">
        <span>Architecture</span>
        <button type="button" aria-label="Close document" className="absolute top-1 right-1">
          <Svg className="size-2" box="0 0 8 8"><path d="M1.500 1.500l5 5M6.500 1.500l-5 5" stroke="#333" strokeWidth="1.5" /></Svg>
        </button>
        <span className="absolute bottom-1 left-1 h-0.5 w-[84px] bg-[#9c8c67]" />
      </div>
      <button type="button" aria-label="New tab" className="mt-[3px] ml-0.5 flex h-[27px] w-[27px] items-center justify-center rounded-sm bg-[#c6c6c6]">
        <Svg className="size-4" box="0 0 16 16"><path d="M0 8h16M8 0v16" stroke="#333" strokeWidth="1.2" /></Svg>
      </button>
    </div>
  );
}

function Sidebar() {
  return (
    <aside className="flex w-[31px] shrink-0 flex-col overflow-hidden bg-[#f3f3f3]">
      <div className="flex h-[11px] shrink-0 items-center justify-end bg-[#e6e6e6] pr-0.5"><Collapse /></div>
      <Grip className="mt-0.5 mb-px ml-[3px] h-[9px] w-[26px]" />
      {PANES.slice(0, 2).map((group, i) => (
        <div key={i} className={clsx("flex flex-col items-center pr-0.5", i === 1 && "mx-px mt-px border-t border-[#c2c2c2] pt-0.5")}>
          {group.slice(0, i === 1 ? 2 : undefined).map((item) => (
            <ToolButton key={item.label} label={item.label} className="w-7">{item.icon()}</ToolButton>
          ))}
        </div>
      ))}
      <button type="button" aria-label="More panes" className="mt-0.5 flex shrink-0 justify-center pr-0.5"><DoubleChevron /></button>
    </aside>
  );
}

/* Plan of a curved wall: every arc shares one centre. */
const CX = 626;
const CY = 535;

const ring = (r: number) => `M${CX - r} ${CY}a${r} ${r} 0 0 1 ${2 * r} 0a${r} ${r} 0 0 1 ${-2 * r} 0`;

function createRandom(seed: number) {
  let state = seed;
  return () => {
    state = (state * 16807) % 2147483647;
    return state / 2147483647;
  };
}

const random = createRandom(4271);

const speckles = Array.from({ length: 560 }, () => {
  const a = Math.PI - 0.2 + random() * 1.15;
  const r = 295.5 + random() * 8.5;
  const x = CX + r * Math.cos(a);
  const y = CY + r * Math.sin(a);
  return `M${x.toFixed(1)} ${y.toFixed(1)}l${(random() * 2 - 1).toFixed(1)} ${(0.4 + random() * 1.2).toFixed(1)}`;
}).join("");

function Drawing() {
  return (
    <svg viewBox="228 203 450 376" className="h-[376px] w-[450px]" fill="none" stroke="#000" aria-label="Architecture plan">
      <path d={ring(305)} strokeWidth="1.2" />
      <path d={ring(294)} strokeWidth="1.2" />
      <path d={speckles} strokeWidth="1" />
      <path d="M358 430A289 289 0 0 1 420 333" />
      <path d="M335 426A311 311 0 0 0 319 590M335 426l10 3" />
      <path d={ring(264)} strokeWidth="1.2" />
      <path d="M349 430h60" strokeWidth="2" />
      <path d="M342 446h60M321 536h90M343 434v12M309 430.500h19" />
      <path d="M346 433v13M351 430v16M343 435h8M343 441h8" strokeWidth="2" />
      <path d="M317 393.500h14l17 35 31 14M288 417.500h25v12M282 504.500l6 .2 26 6M386 375l14 11" />
      <path d="M313 431l-2.500-4h5zM316 511l-5-2.500-1 3.500zM380 443l-5-3.500-1 4zM385 374l5 1-3 3z" fill="#000" strokeWidth=".5" />
      <path d="M328 528l5 6M326 534l8-6" />
      <g fill="#444" stroke="none" className="font-['Liberation_Sans'] text-[4px] font-bold">
        <text x="261" y="395">1 3/4"x11 7/8" SCL 'CURVED'</text>
        <text x="261" y="400">LEDGER, C/W ANCHOR</text>
        <text x="261" y="404">BOLTS CAST INTO CONC</text>
        <text x="261" y="409">CORBEL</text>
        <text x="261" y="419">POUR JOINT</text>
        <text x="253" y="506">FORM SET #2</text>
        <text x="334" y="528">10"</text>
        <text x="361" y="514" transform="rotate(-90 361 514)">30' - 0"</text>
      </g>
    </svg>
  );
}

function Workspace() {
  return (
    <div className="flex min-h-0 flex-1">
      <main className="relative flex flex-1 justify-center overflow-hidden border border-[#2c2c2c] bg-linear-to-b from-[#909090] via-[#adadad] via-40% to-[#acacac] pt-1">
        <div className="absolute inset-0 bg-[repeating-conic-gradient(rgba(0,0,0,0.05)_0_25%,transparent_0_50%)] bg-[length:4px_4px] shadow-[inset_0_0_5px_rgba(0,0,0,0.5)]" />
        <div className="relative h-[600px] w-[454px] shrink-0 border border-[#111] bg-white shadow-[0_0_10px_1px_rgba(0,0,0,0.6)]">
          <Drawing />
        </div>
      </main>
      <div className="flex w-4 shrink-0 flex-col items-center justify-between bg-[#f0f0f0] pb-1">
        <div className="h-16 w-[5px] rounded-full bg-[#8a8a8a]" />
        <Chevron className="text-[#555]" />
      </div>
    </div>
  );
}

function StatusBar() {
  return (
    <footer className="flex h-[31px] shrink-0 bg-[#f3f3f3] pl-0.5">
      <BarGrip />
      <ToolButton label="Options" className="mt-0.5 w-6"><GearsIcon /></ToolButton>
      <ToolButton label="More options" className="mt-0.5 w-[15px]"><Chevron /></ToolButton>
      <Divider className="my-0.5" />
      <ToolButton label="Customize toolbar" className="mt-0.5 w-4"><DoubleChevron /></ToolButton>
      <div className="ml-[125px] flex items-start">
        <BarGrip />
        <ToolButton label="First page" className="mt-0.5 ml-0.5 w-6 opacity-60"><GoToIcon /></ToolButton>
        <ToolButton label="Previous page" className="mt-0.5 ml-1 w-6 opacity-60">
          <Svg>
            <circle cx="12" cy="12" r="10.5" fill="#fff" stroke={GREY} strokeWidth="1.2" />
            <path d="M14 7.500L9 12l5 4.500" stroke={BLUE} strokeWidth="2" />
          </Svg>
        </ToolButton>
        <label className="mt-1 ml-1 flex h-[23px] w-[95px] items-center rounded-sm border border-[#b3b3b3] bg-white pr-0.5 text-[14px]">
          <input aria-label="Current page" defaultValue="1" className="w-full min-w-0 bg-transparent text-right outline-none" />
          /4
        </label>
        <ToolButton label="Next page" className="mt-0.5 ml-1 w-6 opacity-60"><ZoomStepIcon /></ToolButton>
      </div>
      <div className="ml-auto flex items-start">
        <label className="mt-[5px] flex w-[155px] items-center">
          <input
            type="range"
            aria-label="Zoom"
            defaultValue={50}
            className="h-5 w-full appearance-none bg-[linear-gradient(90deg,#8f8f8f_50%,#bdbdbd_50%)] bg-[length:100%_3px] bg-center bg-no-repeat outline-none [&::-webkit-slider-thumb]:size-[19px] [&::-webkit-slider-thumb]:appearance-none [&::-webkit-slider-thumb]:rounded-full [&::-webkit-slider-thumb]:border [&::-webkit-slider-thumb]:border-[#555] [&::-webkit-slider-thumb]:bg-[radial-gradient(circle,#8a8a8a_3px,#fff_4px)]"
          />
        </label>
        <ToolButton label="Customize zoom bar" className="mt-0.5 w-4"><DoubleChevron /></ToolButton>
        <BarGrip />
        <ToolButton label="More bars" className="mt-0.5 ml-2 w-3"><DoubleChevron /></ToolButton>
        <div className="flex w-3 justify-center self-stretch bg-[#e2e2e2]">
          <Svg className="size-2" box="0 0 8 8"><path d="M1 0l3 3 3-3M0 6.500h8" stroke="#333" strokeWidth="1.3" /></Svg>
        </div>
      </div>
    </footer>
  );
}

function WindowPanel() {
  return (
    <div className="absolute top-[145px] right-0 left-[729px] flex h-[92px] overflow-hidden bg-[#f4f4f4] pt-[3px] whitespace-nowrap shadow-[0_1px_6px_rgba(0,0,0,0.6)]">
      <div className="flex w-[127px] shrink-0 flex-col items-start">
        <button type="button" className="flex h-7 items-center gap-1"><WindowsIcon />Document Tabs<Chevron /></button>
        <button type="button" className="flex h-7 w-[74px] items-center gap-1 rounded-r-sm border border-l-0 border-[#cbb87e] bg-[#ebd9a8]"><PanesIcon />Panes<Chevron className="mr-px ml-auto text-[#333]" /></button>
        <button type="button" disabled className="flex h-7 items-center gap-1 text-[#8a8a8a]"><PortfolioIcon />Portfolio<Chevron className="text-[#999]" /></button>
      </div>
      <Divider className="mb-1" />
      <BigButton className="w-[52px] pt-2" icon={<span className="mb-2"><ThemesIcon /></span>} lines={["UI", "Themes"]} />
    </div>
  );
}

function PanesMenu() {
  return (
    <div role="menu" className="absolute top-[111px] bottom-0 left-[398px] w-[331px] overflow-hidden rounded-t-md bg-[#f4f4f4] px-1 pt-1 shadow-[0_0_5px_rgba(0,0,0,0.6)]">
      {PANES.map((group, i) => (
        <div key={i} className={clsx(i > 0 && "mt-px border-t border-[#c4c4c4] pt-px")}>
          {group.map((item) => (
            <button
              key={item.label}
              type="button"
              role="menuitem"
              className={clsx(
                "flex h-7 w-full items-center gap-[3px] rounded-sm pr-2.5 pl-4 text-left whitespace-nowrap",
                item.label === "Accessibility Report" && "bg-[#f5dfa6]",
              )}
            >
              {item.icon()}
              <span className="flex-1">{item.label}</span>
              <span>{item.keys}</span>
            </button>
          ))}
        </div>
      ))}
    </div>
  );
}

export default function App() {
  return (
    <div className="relative h-screen w-full overflow-hidden bg-[#e4e4e4] pb-px font-['Open_Sans','Noto_Sans',sans-serif] text-[12px] leading-4 text-black">
      <div className="flex h-full flex-col overflow-hidden rounded-lg border border-[#a9a9a9] bg-[#d4d4d4]">
        <TitleBar />
        <RibbonTabs />
        <Ribbon />
        <DocumentTabs />
        <div className="flex min-h-0 flex-1">
          <Sidebar />
          <div className="flex min-w-0 flex-1 flex-col">
            <Workspace />
            <StatusBar />
          </div>
        </div>
      </div>
      <WindowPanel />
      <PanesMenu />
    </div>
  );
}
